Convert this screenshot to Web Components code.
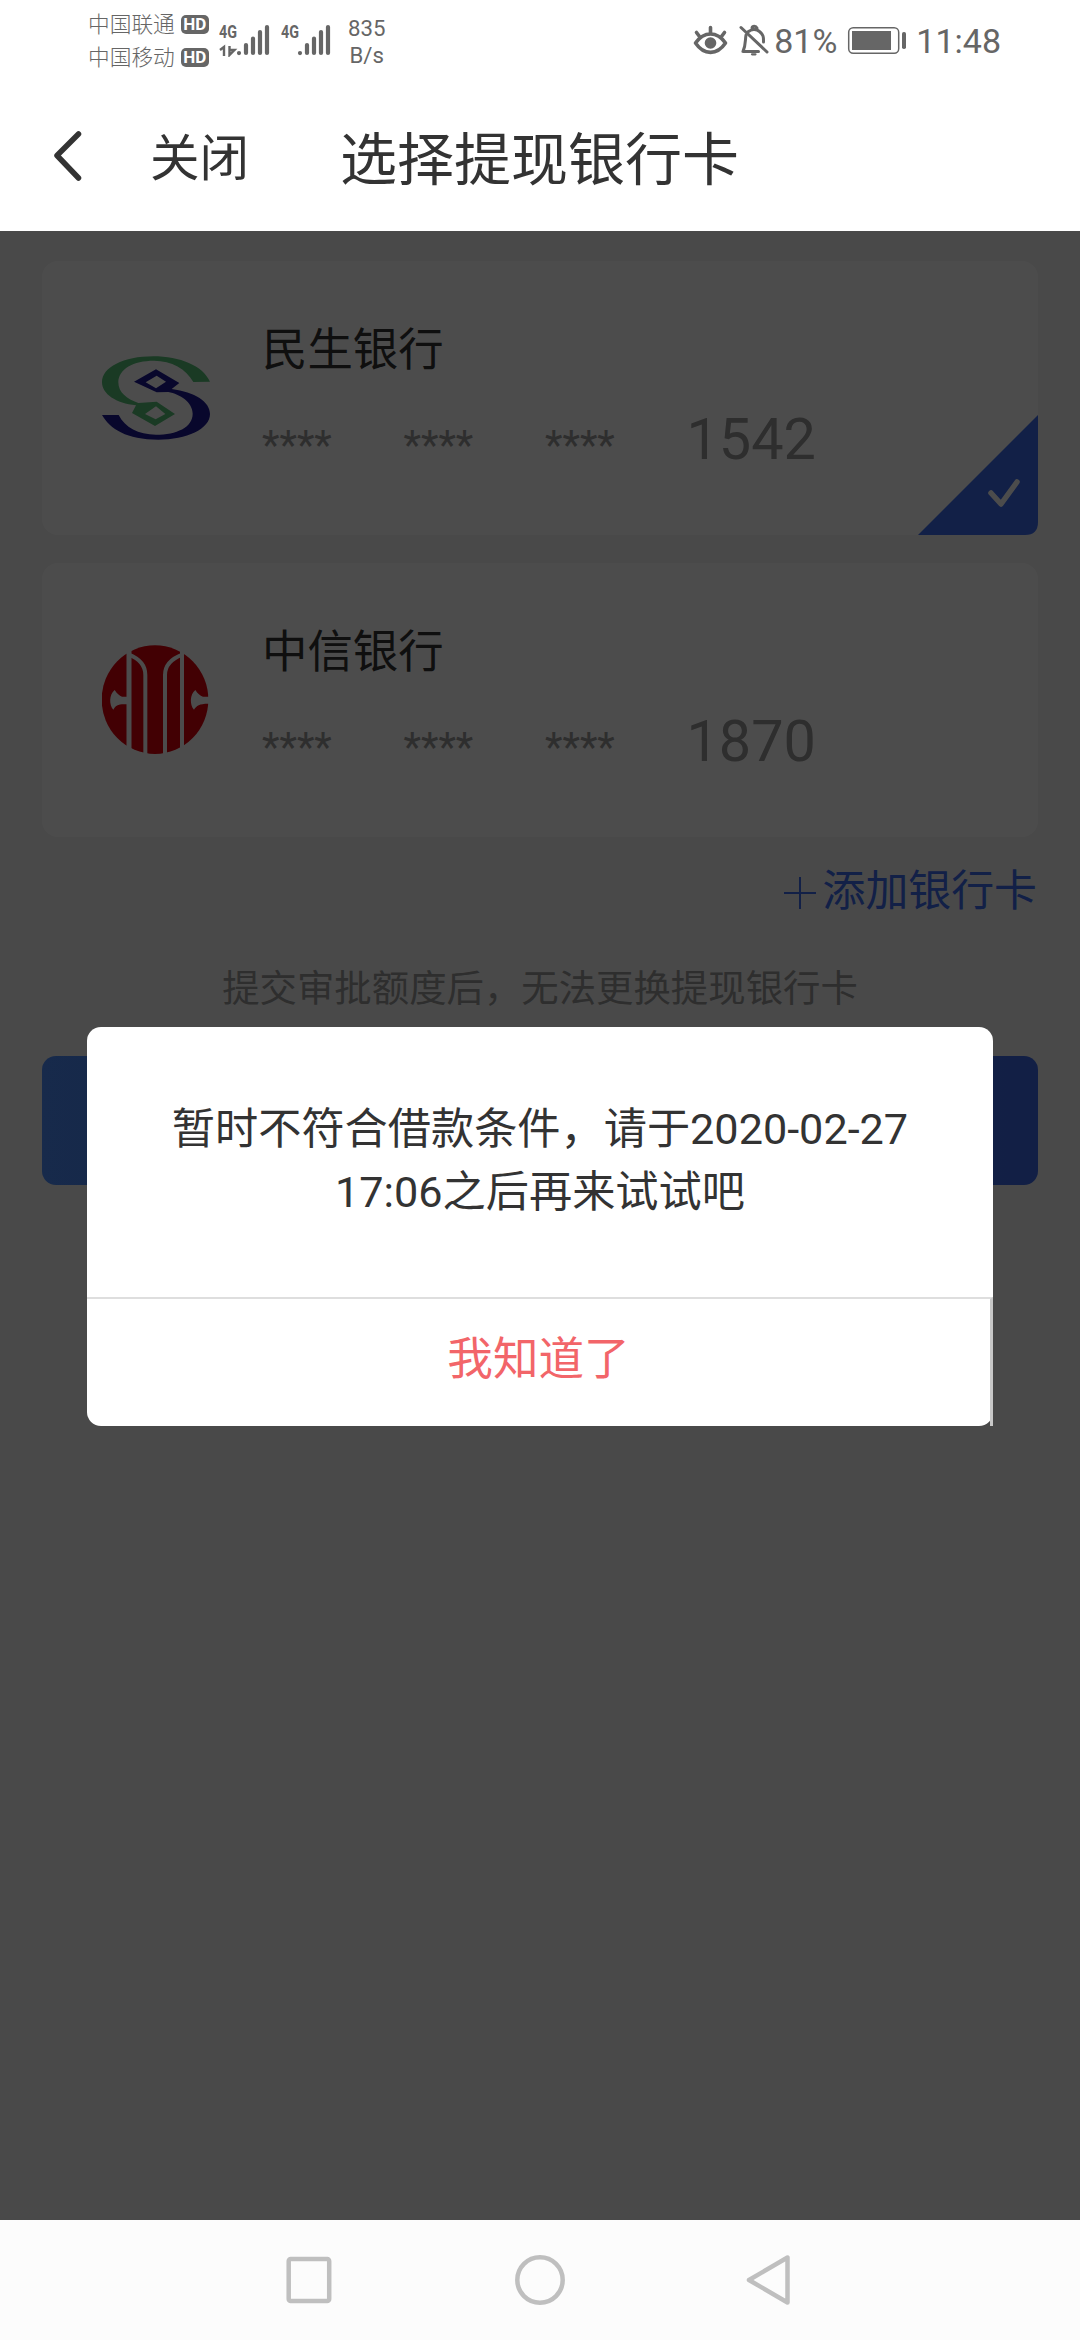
<!DOCTYPE html>
<html lang="zh-CN">
<head>
<meta charset="utf-8">
<title>选择提现银行卡</title>
<style>
html, body {
  margin: 0;
}
body {
  width: 1080px;
  height: 2340px;
  overflow: hidden;
  background: #fff;
  font-family: Roboto, "Noto Sans CJK SC", sans-serif;
  color: #333;
}
</style>
</head>
<body>
<phone-screen>
  <status-bar slot="top"></status-bar>
  <title-bar slot="top">选择提现银行卡</title-bar>

  <bank-card name="民生银行" tail="1542" selected>
    <svg width="108" height="84" viewBox="216 341 324 252">
      <path fill="#58c27a" fill-rule="evenodd" d="M540 418C518 370 450 342 370 342C280 342 216 375 216 420C216 455 258 483 318 489L306 512L375 551L435 515L380 478L325 482C290 470 265 450 265 420C265 380 310 355 372 355C425 355 468 380 490 419ZM345 515L378 492L406 515L377 531Z"/>
      <path fill="#1d1894" fill-rule="evenodd" d="M216 518L266 518C285 555 325 577 378 577C440 577 488 555 488 514C488 480 450 455 415 449L380 450L312 418L378 381L448 422L425 440C495 450 540 478 540 515C540 560 470 592 385 592C290 592 240 560 216 518ZM347 420L380 400L408 418L378 438Z"/>
    </svg>
  </bank-card>
  <bank-card name="中信银行" tail="1870">
    <svg width="108" height="110" viewBox="216 282 324 330">
      <ellipse cx="375" cy="446" rx="160" ry="163" fill="#dc000c"/>
      <g fill="none" stroke="#fff" stroke-width="12">
        <path stroke-width="15" d="M297 296V600"/>
        <path d="M456 296V600"/>
        <path d="M296 311C325 322 346 342 346 372V612M457 311C428 322 405 342 405 372V612"/>
      </g>
      <path fill="#fff" d="M292 437H276C268 434 261 428 254 417C237 430 237 462 250 476C257 463 266 458 292 460ZM540 437H519C510 434 503 428 496 417C479 430 479 462 492 476C500 463 510 457 540 458Z"/>
    </svg>
  </bank-card>

  <add-link>添加银行卡</add-link>
  <notice-text>提交审批额度后，无法更换提现银行卡</notice-text>
  <submit-button></submit-button>

  <alert-dialog slot="modal" action="我知道了">暂时不符合借款条件，请于2020-02-27 17:06之后再来试试吧</alert-dialog>
  <nav-bar slot="bottom"></nav-bar>
</phone-screen>

<script>
// shadow rootにマークアップを流し込む共通クラス
class BaseElement extends HTMLElement {
  constructor() {
    super();
    this.attachShadow({ mode: "open" });
  }

  connectedCallback() {
    this.shadowRoot.innerHTML = this.html();
  }
}

class PhoneScreen extends BaseElement {
  html() {
    return `
<style>
:host {
  display: flex;
  flex-direction: column;
  height: 2340px;
}
main {
  position: relative;
  flex: 1;
  background: #f5f5f5;
}
.content {
  display: flex;
  flex-direction: column;
  padding: 30px 42px 0;
}
.mask {
  position: absolute;
  inset: 0;
  display: flex;
  justify-content: center;
  align-items: flex-start;
  padding-top: 796px;
  background: rgba(0, 0, 0, 0.7);
}
</style>
<slot name="top"></slot>
<main>
  <div class="content"><slot></slot></div>
  <div class="mask"><slot name="modal"></slot></div>
</main>
<slot name="bottom"></slot>`;
  }
}

class SignalIcon extends BaseElement {
  html() {
    const arrows = this.hasAttribute("data")
      ? `<path d="M1 27l4-3v9M10.500 23v9l5-5h-5" fill="none" stroke="#666" stroke-width="2.4"/>`
      : "";
    const x = this.hasAttribute("data") ? 20 : 19;
    return `
<style>
:host {
  display: block;
  height: 34px;
}
svg {
  display: block;
}
</style>
<svg width="52" height="34" viewBox="0 0 52 34">
  <text x="0" y="15" font-family="Roboto" font-weight="700" font-size="18" fill="#666" textLength="18" lengthAdjust="spacingAndGlyphs">4G</text>
  ${arrows}
  <path d="M${x} 30v.1M${x + 7} 22v8M${x + 14} 15.500v14.5M${x + 21} 9v21M${x + 28} 4v26" stroke="#666" stroke-width="4.2" stroke-linecap="round"/>
</svg>`;
  }
}

class StatusBar extends BaseElement {
  html() {
    return `
<style>
:host {
  display: flex;
  justify-content: space-between;
  box-sizing: border-box;
  height: 80px;
  padding: 0 79px 0 88px;
  color: #666;
}
.left, .right {
  display: flex;
  align-items: flex-start;
}
.carriers {
  padding-top: 8px;
  font-size: 21.7px;
  font-weight: 300;
  line-height: 33px;
}
.carriers div {
  display: flex;
  align-items: center;
}
.hd {
  box-sizing: border-box;
  width: 28px;
  height: 19px;
  margin-left: 6px;
  border-radius: 5px;
  background: #666;
  color: #fff;
  font-size: 17px;
  font-weight: 700;
  line-height: 19px;
  text-align: center;
}
signal-icon {
  margin: 23px 0 0 10px;
}
.speed {
  width: 40px;
  margin: 15px 0 0 14px;
  font-size: 22.2px;
  line-height: 27px;
  text-align: center;
}
.right {
  padding-top: 21px;
  font-size: 34px;
  line-height: 40px;
}
svg {
  display: block;
}
</style>
<div class="left">
  <div class="carriers">
    <div>中国联通<span class="hd">HD</span></div>
    <div>中国移动<span class="hd">HD</span></div>
  </div>
  <signal-icon data></signal-icon>
  <signal-icon></signal-icon>
  <div class="speed">835<br>B/s</div>
</div>
<div class="right">
  <svg width="81" height="36" viewBox="693 21 81 36" fill="none" stroke="#666" stroke-width="3.6" stroke-linecap="round" stroke-linejoin="round">
    <path d="M695.5 43C704 31 717 31 725.5 43C717 55.500 704 55.500 695.500 43Z"/>
    <circle cx="710.500" cy="43" r="5.800" fill="#666" stroke="none"/>
    <path d="M710.500 27.500v5M696.500 32.500l3 4M724.500 32.500l-3 4"/>
    <g stroke-width="3">
      <path d="M741 27.500L767 52"/>
      <path d="M746 35C745 40 746 45 743 51.500H758.500M748.500 31.500C751 29.500 756 28.500 759.500 31.500C764 35 763.500 38 763.500 42M752 28C752.500 25.800 756 25.800 757 28"/>
      <path d="M752 54.300h3.500" stroke-width="2.200"/>
    </g>
  </svg>
  <span>81%</span>
  <svg width="60" height="36" viewBox="846 21 60 36" style="margin: 0 9px 0 10px">
    <rect x="847.700" y="27.700" width="50" height="25.600" rx="4.500" fill="none" stroke="#666" stroke-width="1.500"/>
    <path d="M851 31h39v19h-39z" fill="#666"/>
    <rect x="901" y="32" width="4" height="17" rx="1.800" fill="#666"/>
  </svg>
  <span>11:48</span>
</div>`;
  }
}

class TitleBar extends BaseElement {
  html() {
    return `
<style>
:host {
  display: flex;
  align-items: center;
  box-sizing: border-box;
  height: 151px;
  padding: 4px 54px 0 53px;
}
svg {
  display: block;
  margin-bottom: 3px;
}
.close {
  width: 190px;
  margin-left: 67px;
  font-size: 49.5px;
}
.title {
  font-size: 57px;
}
.close {
  padding-top: 2px;
  line-height: 80px;
}
.title {
  padding-top: 6px;
  line-height: 80px;
}
</style>
<svg width="30" height="50" viewBox="0 0 30 50"><path d="M25.500 3L4 24.500L25.500 47" fill="none" stroke="#333" stroke-width="5.500" stroke-linecap="round" stroke-linejoin="round"/></svg>
<div class="close">关闭</div>
<div class="title"><slot></slot></div>`;
  }
}

class BankCard extends BaseElement {
  html() {
    const badge = this.hasAttribute("selected")
      ? `<svg class="badge" width="120" height="120" viewBox="0 0 120 120">
  <path d="M120 0V107Q120 120 107 120H0Z" fill="#3c6bee"/>
  <path d="M73 78L83 89L99 67" fill="none" stroke="#fff" stroke-width="5.500" stroke-linecap="round" stroke-linejoin="round"/>
</svg>`
      : "";
    return `
<style>
:host {
  position: relative;
  display: flex;
  box-sizing: border-box;
  height: 274px;
  margin-bottom: 28px;
  padding-left: 60px;
  border-radius: 16px;
  background: #fff;
}
.logo {
  display: flex;
  align-items: center;
  width: 108px;
  margin-right: 52px;
}
.name {
  margin-top: 57px;
  font-size: 45.4px;
  line-height: 66px;
}
.number {
  display: flex;
  align-items: baseline;
  margin-top: 23px;
  color: #999;
}
.stars {
  width: 141.5px;
  font-size: 40.500px;
}
.tail {
  font-size: 57.600px;
  line-height: 66px;
}
.badge {
  position: absolute;
  right: 0;
  bottom: 0;
}
</style>
<div class="logo"><slot></slot></div>
<div>
  <div class="name">${this.getAttribute("name")}</div>
  <div class="number">
    <span class="stars">****</span>
    <span class="stars">****</span>
    <span class="stars">****</span>
    <span class="tail">${this.getAttribute("tail")}</span>
  </div>
</div>
${badge}`;
  }
}

class AddLink extends BaseElement {
  html() {
    return `
<style>
:host {
  display: flex;
  justify-content: flex-end;
  align-items: center;
  height: 60px;
  margin-top: -4px;
  padding-right: 1px;
  color: #3c6bee;
  font-size: 42.900px;
  line-height: 60px;
}
svg {
  margin: 3px 7px 0 0;
}
</style>
<svg width="32" height="32" viewBox="0 0 32 32"><path d="M16 0v32M0 16h32" stroke="#3c6bee" stroke-width="2"/></svg>
<slot></slot>`;
  }
}

class NoticeText extends BaseElement {
  html() {
    return `
<style>
:host {
  display: block;
  margin-top: 42px;
  color: #999;
  font-size: 37.400px;
  line-height: 52px;
  text-align: center;
  white-space: nowrap;
}
</style>
<slot></slot>`;
  }
}

class SubmitButton extends BaseElement {
  html() {
    return `
<style>
:host {
  display: block;
  height: 129px;
  margin-top: 41px;
  border-radius: 14px;
  background: linear-gradient(90deg, #4d8cfa, #3c69e6);
}
</style>`;
  }
}

class AlertDialog extends BaseElement {
  html() {
    return `
<style>
:host {
  display: flex;
  flex-direction: column;
  width: 906px;
  height: 399px;
  border-radius: 14px;
  background: #fff;
}
.message {
  flex: 1;
  padding: 71px 80px 0;
  font-size: 43.200px;
  line-height: 63px;
  text-align: center;
}
.action {
  box-sizing: border-box;
  height: 129px;
  border-top: 2px solid #dedede;
  border-right: 3px solid #c8c8c8;
  color: #f26569;
  font-size: 45.600px;
  line-height: 121px;
  text-align: center;
}
</style>
<div class="message"><slot></slot></div>
<div class="action">${this.getAttribute("action")}</div>`;
  }
}

class NavBar extends BaseElement {
  html() {
    return `
<style>
:host {
  display: flex;
  justify-content: center;
  align-items: center;
  gap: 178px;
  height: 120px;
  background: #fcfcfc;
}
</style>
<svg width="52" height="52" viewBox="0 0 52 52"><rect x="4.700" y="5" width="40.500" height="42" rx="2" fill="none" stroke="#bfbfbf" stroke-width="4.500"/></svg>
<svg width="52" height="52" viewBox="0 0 52 52"><circle cx="26" cy="26" r="22.700" fill="none" stroke="#bfbfbf" stroke-width="4.500"/></svg>
<svg width="52" height="52" viewBox="0 0 52 52"><path d="M43.500 3.500V48.500L5 26Z" fill="none" stroke="#bfbfbf" stroke-width="4.500" stroke-linejoin="round"/></svg>`;
  }
}

customElements.define("phone-screen", PhoneScreen);
customElements.define("signal-icon", SignalIcon);
customElements.define("status-bar", StatusBar);
customElements.define("title-bar", TitleBar);
customElements.define("bank-card", BankCard);
customElements.define("add-link", AddLink);
customElements.define("notice-text", NoticeText);
customElements.define("submit-button", SubmitButton);
customElements.define("alert-dialog", AlertDialog);
customElements.define("nav-bar", NavBar);
</script>
</body>
</html>
